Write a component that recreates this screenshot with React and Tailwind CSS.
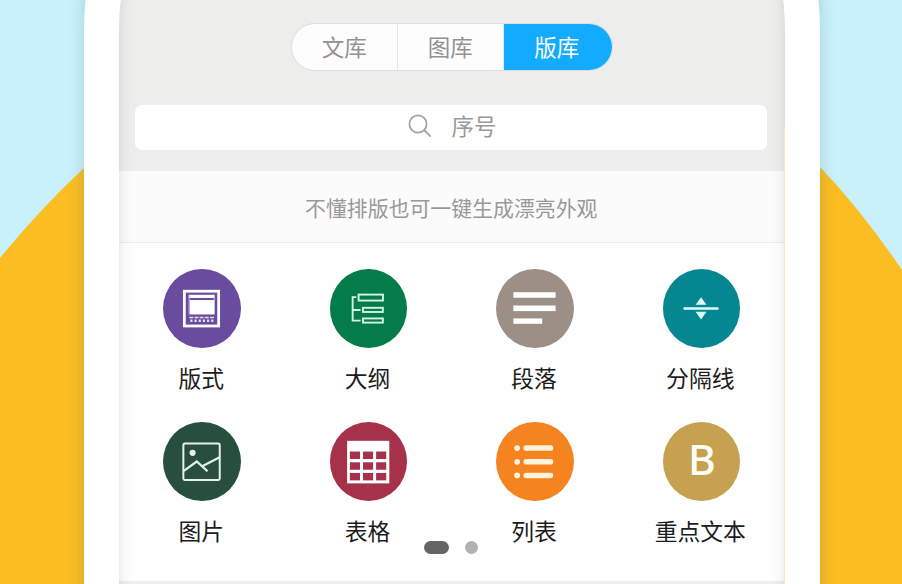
const tabs = [
    { name: "文库" },
    { name: "图库" },
    { name: "版库", active: true },
];

const LayoutIcon = () => (
    <svg className="size-full" viewBox="0 0 78 78" fill="none">
        <rect x="21.5" y="21.6" width="34.5" height="35" stroke="#fff" strokeWidth="2.8" />
        <rect x="26" y="25.2" width="26" height="3.2" fill="#fff" />
        <path d="M26.3 25v20M51.7 25v20" stroke="#cfc2e6" strokeWidth="1" />
        <rect x="27" y="30.5" width="24.5" height="14.5" fill="#fff" />
        <path d="M26.5 48h25.5" stroke="#e4dcf1" strokeWidth="1.6" strokeDasharray="4 1.2" />
        <path d="M27.5 51.3h24" stroke="#e4dcf1" strokeWidth="2.4" strokeDasharray="2.2 2" />
    </svg>
);

const OutlineIcon = () => (
    <svg className="size-full" viewBox="0 0 78 78" fill="none" stroke="#d5f5e4" strokeWidth="1.9">
        <path d="M26.5 27.5h-3.7v23.7h8M22.8 40.5h8" />
        <rect x="28.8" y="25" width="24.5" height="6" />
        <rect x="33.2" y="38.3" width="20" height="4.2" />
        <rect x="33.2" y="49" width="20" height="4.2" />
    </svg>
);

const ParagraphIcon = () => (
    <svg className="size-full" viewBox="0 0 78 78" fill="#fff">
        <rect x="17.5" y="22.6" width="42.5" height="5.6" />
        <rect x="17.5" y="36" width="42.5" height="5.6" />
        <rect x="17.5" y="49" width="29" height="5.4" />
    </svg>
);

const DividerIcon = () => (
    <svg className="size-full" viewBox="0 0 78 78" fill="#dcfbfc">
        <rect x="20.5" y="37.7" width="35.5" height="2.6" rx="1" />
        <path d="M38.3 27.8 43.8 35.2H32.8zM38.3 50 32.8 42.3h11z" />
    </svg>
);

const PictureIcon = () => (
    <svg className="size-full" viewBox="0 0 78 78" fill="none" stroke="#e3f2ea" strokeWidth="2">
        <rect x="20.5" y="20.9" width="36.6" height="36.6" rx="1.5" />
        <circle cx="29.8" cy="30.3" r="3.1" fill="#e3f2ea" stroke="none" />
        <path d="M21 48.5 34 39l10.8 9.8M40 43.5 57 34.8" strokeWidth="2.2" />
    </svg>
);

const TableIcon = () => (
    <svg className="size-full" viewBox="0 0 78 78">
        <rect x="17.2" y="18.2" width="42.5" height="42.8" fill="#fff" />
        {[29, 39.8, 50.5].map((y) =>
            [20, 33.2, 46.4].map((x) => (
                <rect key={`${x}-${y}`} x={x} y={y} width="10.2" height="7.5" fill="#a6314a" />
            ))
        )}
    </svg>
);

const ListIcon = () => (
    <svg className="size-full" viewBox="0 0 78 78" fill="#fff3d9">
        {[25.5, 39.3, 53].map((y) => (
            <g key={y}>
                <circle cx="21.3" cy={y} r="2.9" />
                <rect x="27.6" y={y - 2.8} width="30" height="5.6" rx="2.6" />
            </g>
        ))}
    </svg>
);

const BoldIcon = () => (
    <span className="-mt-1 ml-px font-['Noto_Sans',sans-serif] text-[42.5px] leading-none font-medium text-[#fffdf5]">B</span>
);

const items = [
    { name: "版式", color: "bg-[#6a4c9e]", Icon: LayoutIcon },
    { name: "大纲", color: "bg-[#047c49]", Icon: OutlineIcon },
    { name: "段落", color: "bg-[#9c9086]", Icon: ParagraphIcon },
    { name: "分隔线", color: "bg-[#048791]", Icon: DividerIcon },
    { name: "图片", color: "bg-[#284f3e]", Icon: PictureIcon },
    { name: "表格", color: "bg-[#a6314a]", Icon: TableIcon },
    { name: "列表", color: "bg-[#f48320]", Icon: ListIcon },
    { name: "重点文本", color: "bg-[#c6a150]", Icon: BoldIcon },
];

const Tabs = () => (
    <div className="mx-auto flex h-12 w-[322px] overflow-hidden rounded-full border border-[#dededc] bg-[#fdfdfd]">
        {tabs.map((tab) => (
            <button
                key={tab.name}
                className={
                    tab.active
                        ? "-my-px -mr-px w-[108px] bg-[#13abfe] pr-0.5 pb-0.5 text-[22.5px] leading-none text-white"
                        : "w-[106px] border-r border-[#e6e6e6] pb-0.5 text-[22.5px] leading-none text-[#929292]"
                }
            >
                {tab.name}
            </button>
        ))}
    </div>
);

const SearchBar = () => (
    <div className="mr-[17.5px] ml-4 mt-[34px] flex h-[45px] items-center justify-center gap-[19px] rounded-[7px] bg-white pl-[3px] text-[22.5px] leading-none text-[#999]">
        <svg className="-mt-1 size-6" viewBox="0 0 24 24" fill="none" stroke="#a3a3a3" strokeWidth="1.8">
            <circle cx="10" cy="10" r="8.6" />
            <path d="m16 16 6.7 6.7" />
        </svg>
        <span className="-mt-1">序号</span>
    </div>
);

const Item = ({ item }) => {
    const { name, color, Icon } = item;
    return (
        <div className="flex h-[152.5px] flex-col items-center">
            <div className={`flex h-[79px] w-[77.5px] items-center justify-center rounded-[50%] ${color}`}>
                <Icon />
            </div>
            <p className="mt-[18px] mr-0.5 text-[22.8px] leading-6 text-[#1c1c1c]">{name}</p>
        </div>
    );
};

const Background = () => (
    <svg className="absolute inset-0" width="902" height="584" viewBox="0 0 902 584">
        <path d="M0 258Q40 209 84 168L820 167Q862 211 902 270V584H0z" fill="#fbbd22" />
    </svg>
);

export default function App() {
    return (
        <div className="relative h-[584px] w-[902px] overflow-hidden bg-[#c8f1fb] font-['Noto_Sans_CJK_SC',sans-serif]">
            <Background />
            <div className="relative -mt-[60px] ml-[83.5px] h-[720px] w-[736.5px] rounded-t-[28px_90px] bg-white px-[35.5px] shadow-[0_0_16px_rgba(70,110,125,0.25)]">
                <div className="relative h-full overflow-hidden rounded-t-[30px_90px] bg-[#fefefe]">
                    <div className="h-[231px] bg-[#ededeb] pt-[83px]">
                        <Tabs />
                        <SearchBar />
                    </div>
                    <div className="flex h-[72px] items-center justify-center border-b border-[#ebebeb] bg-[#fbfbfb] pt-[3px] pr-px text-[20.9px] text-[#999]">
                        不懂排版也可一键生成漂亮外观
                    </div>
                    <div className="relative grid h-[338px] grid-cols-4 content-start pt-[26px]">
                        {items.map((item) => (
                            <Item key={item.name} item={item} />
                        ))}
                        <div className="absolute bottom-[27px] left-[305px] flex items-center gap-4">
                            <span className="h-[13px] w-[25px] rounded-full bg-[#656565]" />
                            <span className="size-[13px] rounded-full bg-[#b2b2b2]" />
                        </div>
                    </div>
                    <div className="h-20 bg-[#ededeb]" />
                    {/* shading along the edges of the screen */}
                    <div className="pointer-events-none absolute inset-0 rounded-t-[30px_90px] shadow-[inset_0_0_12px_rgba(90,80,75,0.18)]" />
                    <div className="absolute top-[187px] right-0 bottom-0 w-px bg-[#f4e6bd]" />
                </div>
            </div>
        </div>
    );
}
